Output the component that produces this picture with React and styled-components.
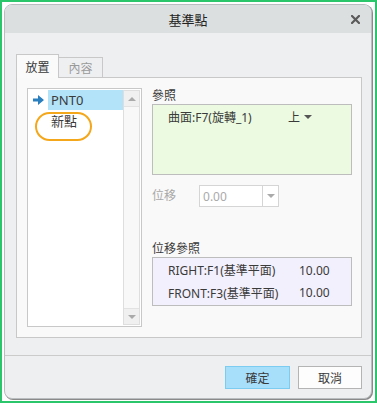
import styled, { createGlobalStyle } from "styled-components";

const Global = createGlobalStyle`
  html, body {
    margin: 0;
    padding: 0;
    background: #ffffff;
  }
  body {
    font-family: "Noto Sans", "Noto Sans CJK TC", sans-serif;
    font-size: 12px;
    color: #3a3a3a;
  }
`;

const Frame = styled.div`
  width: 377px;
  height: 403px;
  box-sizing: border-box;
  border: 2px solid #2bc56c;
  padding: 2px 3px 2px 2px;
`;

const Dialog = styled.div`
  height: 100%;
  box-sizing: border-box;
  border: 1px solid #b9bdc0;
  border-radius: 8px;
  background: #eeeff1;
  box-shadow: 1px 1px 0 #8a8a8a;
  display: flex;
  flex-direction: column;
  overflow: hidden;
`;

const TitleBar = styled.div`
  height: 28px;
  flex-shrink: 0;
  background: #dcdfe0;
  display: flex;
  align-items: center;
  justify-content: center;
  position: relative;
  font-size: 13px;
  color: #222;
`;

const Close = styled.span`
  position: absolute;
  right: 11px;
  top: 10px;
  display: flex;
`;

const Body = styled.div`
  padding: 21px 10px 0 11px;
  display: flex;
  flex-direction: column;
`;

const Tabs = styled.div`
  display: flex;
  align-items: flex-end;
  height: 23px;
`;

const Tab = styled.div`
  box-sizing: border-box;
  width: ${(p) => (p.$active ? 43 : 44)}px;
  height: ${(p) => (p.$active ? 24 : 20)}px;
  border: 1px solid #c8c8c8;
  border-bottom: none;
  border-left: ${(p) => (p.$active ? "1px solid #c8c8c8" : "none")};
  background: ${(p) => (p.$active ? "#fafafa" : "#eeeff1")};
  color: ${(p) => (p.$active ? "#3a3a3a" : "#9a9a9a")};
  display: flex;
  align-items: center;
  justify-content: center;
  font-size: 12px;
  margin-bottom: ${(p) => (p.$active ? -1 : 0)}px;
  position: relative;
`;

const Panel = styled.div`
  box-sizing: border-box;
  width: 346px;
  height: 261px;
  border: 1px solid #c8c8c8;
  background: #f9f9f9;
  padding: 10px 9px 10px 10px;
  display: flex;
  gap: 10px;
`;

const ListBox = styled.div`
  box-sizing: border-box;
  width: 115px;
  height: 239px;
  border: 1px solid #c8c8c8;
  background: #fff;
  display: flex;
  position: relative;
  padding: 1px;
`;

const Items = styled.div`
  flex: 1;
  display: flex;
  flex-direction: column;
`;

const Item = styled.div`
  height: 20px;
  display: flex;
  align-items: center;
  padding-left: 4px;
  font-size: 13px;
`;

const ArrowSlot = styled.div`
  width: 15px;
  display: flex;
  align-items: center;
`;

const ItemLabel = styled.div`
  flex: 1;
  height: 100%;
  display: flex;
  align-items: center;
  padding-left: 3px;
  background: ${(p) => (p.$selected ? "#b3e3f9" : "transparent")};
`;

const Highlight = styled.div`
  position: absolute;
  left: 7px;
  top: 23px;
  width: 57px;
  height: 29px;
  box-sizing: border-box;
  border: 2px solid #f5a71c;
  border-radius: 15px;
`;

const ScrollBar = styled.div`
  width: 15px;
  border: 1px solid #dedede;
  background: #f8f8f8;
  display: flex;
  flex-direction: column;
  justify-content: space-between;
`;

const ScrollButton = styled.div`
  height: 15px;
  background: #f0f0f0;
  display: flex;
  align-items: center;
  justify-content: center;
  border-${(p) => (p.$up ? "bottom" : "top")}: 1px solid #e2e2e2;
`;

const Triangle = styled.div`
  width: 0;
  height: 0;
  border-left: 4px solid transparent;
  border-right: 4px solid transparent;
  ${(p) => (p.$up ? "border-bottom" : "border-top")}: 4px solid ${(p) => p.$color || "#aaa"};
`;

const Side = styled.div`
  width: 200px;
  display: flex;
  flex-direction: column;
`;

const Label = styled.div`
  font-size: 12px;
  height: 16px;
  line-height: 16px;
  margin-top: ${(p) => p.$mt || 0}px;
  color: ${(p) => (p.$muted ? "#a8a8a8" : "#3a3a3a")};
`;

const RefBox = styled.div`
  box-sizing: border-box;
  height: ${(p) => p.$h}px;
  border: 1px solid #bdbdbd;
  background: ${(p) => p.$bg};
  padding: ${(p) => p.$pad};
  display: flex;
  flex-direction: column;
`;

const RefRow = styled.div`
  height: ${(p) => p.$h || 22}px;
  display: flex;
  align-items: center;
  padding-left: 15px;
  font-size: 12px;
`;

const RefName = styled.span`
  width: ${(p) => p.$w}px;
`;

const SideChoice = styled.span`
  display: flex;
  align-items: center;
  gap: 4px;
`;

const OffsetRow = styled.div`
  margin-top: 10px;
  display: flex;
  align-items: center;
  height: 22px;
  gap: 23px;
`;

const Input = styled.div`
  box-sizing: border-box;
  width: 80px;
  height: 22px;
  border: 1px solid #d5d5d5;
  background: #fff;
  display: flex;
`;

const InputText = styled.div`
  flex: 1;
  padding-left: 3px;
  display: flex;
  align-items: center;
  color: #aaa;
  font-size: 12px;
`;

const InputDrop = styled.div`
  width: 15px;
  border-left: 1px solid #d5d5d5;
  display: flex;
  align-items: center;
  justify-content: center;
`;

const Separator = styled.div`
  height: 1px;
  background: #cbcbcb;
  margin-top: 17px;
`;

const Footer = styled.div`
  display: flex;
  justify-content: flex-end;
  gap: 8px;
  padding: 10px 9px 0 0;
`;

const Button = styled.button`
  box-sizing: border-box;
  width: ${(p) => (p.$primary ? 65 : 64)}px;
  height: 23px;
  border: 1px solid ${(p) => (p.$primary ? "#7ccbf1" : "#b4b4b4")};
  background: ${(p) => (p.$primary ? "#a7defa" : "#fdfdfd")};
  font-family: "Noto Sans", "Noto Sans CJK TC", sans-serif;
  font-size: 12px;
  color: #3a3a3a;
  padding: 0;
`;

const PointArrow = () => (
  <svg width="11" height="10" viewBox="0 0 11 10">
    <path d="M0 3.5 H5 V0 L11 5 L5 10 V6.5 H0 Z" fill="#2a7fbf" />
  </svg>
);

const CloseIcon = () => (
  <svg width="9" height="9" viewBox="0 0 9 9">
    <path d="M1 1 L8 8 M8 1 L1 8" stroke="#5a5a5a" strokeWidth="2.2" strokeLinecap="square" />
  </svg>
);

export default function App() {
  return (
    <Frame>
      <Global />
      <Dialog>
        <TitleBar>
          基準點
          <Close>
            <CloseIcon />
          </Close>
        </TitleBar>
        <Body>
          <Tabs>
            <Tab $active>放置</Tab>
            <Tab>內容</Tab>
          </Tabs>
          <Panel>
            <ListBox>
              <Items>
                <Item>
                  <ArrowSlot>
                    <PointArrow />
                  </ArrowSlot>
                  <ItemLabel $selected>PNT0</ItemLabel>
                </Item>
                <Item>
                  <ArrowSlot />
                  <ItemLabel>新點</ItemLabel>
                </Item>
              </Items>
              <ScrollBar>
                <ScrollButton $up>
                  <Triangle $up />
                </ScrollButton>
                <ScrollButton>
                  <Triangle />
                </ScrollButton>
              </ScrollBar>
              <Highlight />
            </ListBox>
            <Side>
              <Label>參照</Label>
              <RefBox $h={71} $bg="#ebfae0" $pad="1px 0 0 0">
                <RefRow>
                  <RefName $w={120}>曲面:F7(旋轉_1)</RefName>
                  <SideChoice>
                    上
                    <Triangle $color="#555" />
                  </SideChoice>
                </RefRow>
              </RefBox>
              <OffsetRow>
                <Label $muted>位移</Label>
                <Input>
                  <InputText>0.00</InputText>
                  <InputDrop>
                    <Triangle $color="#aaa" />
                  </InputDrop>
                </Input>
              </OffsetRow>
              <Label $mt={34}>位移參照</Label>
              <RefBox $h={49} $bg="#f3f0fd" $pad="1px 0">
                <RefRow $h={24}>
                  <RefName $w={131}>RIGHT:F1(基準平面)</RefName>
                  10.00
                </RefRow>
                <RefRow $h={24}>
                  <RefName $w={131}>FRONT:F3(基準平面)</RefName>
                  10.00
                </RefRow>
              </RefBox>
            </Side>
          </Panel>
        </Body>
        <Separator />
        <Footer>
          <Button $primary>確定</Button>
          <Button>取消</Button>
        </Footer>
      </Dialog>
    </Frame>
  );
}
